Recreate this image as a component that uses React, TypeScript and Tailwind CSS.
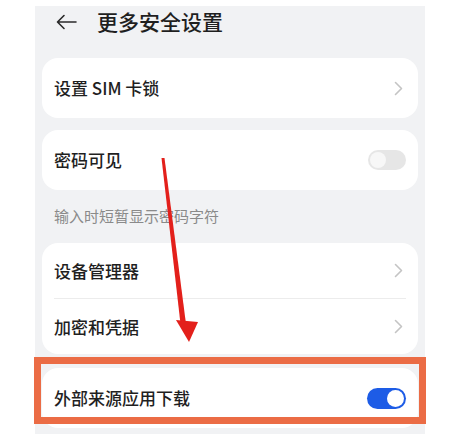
import React from 'react'

const font = { fontFamily: '"Noto Sans CJK SC", "Noto Sans", sans-serif' }

const Chevron = () => (
  <svg width="9" height="15" viewBox="0 0 9 15" fill="none">
    <path d="M1.5 1.5 L7.5 7.5 L1.5 13.5" stroke="#c4c4c4" strokeWidth="1.6" strokeLinecap="round" strokeLinejoin="round" />
  </svg>
)

const Toggle = ({ on }: { on: boolean }) =>
  on ? (
    <div className="w-[39px] h-[21px] rounded-full bg-[#1d5ce6] flex items-center justify-end pr-[2px]">
      <div className="w-[17px] h-[17px] rounded-full bg-white" />
    </div>
  ) : (
    <div className="w-[38px] h-[20px] rounded-full bg-[#e6e6e6] flex items-center pl-[2px]">
      <div className="w-[16px] h-[16px] rounded-full bg-[#f7f7f7]" />
    </div>
  )

const Row = ({ label, right }: { label: string; right: React.ReactNode }) => (
  <div className="flex items-center justify-between pl-[12px] pr-[12px] h-[55px]">
    <span className="text-[17px] font-medium text-[#1f1f1f]">{label}</span>
    {right}
  </div>
)

const App = () => {
  return (
    <div className="relative w-[473px] h-[434px] bg-white overflow-hidden" style={font}>
      <div className="ml-[35px] mt-[6px] w-[390px] h-[428px] bg-[#f1f2f4] flex flex-col px-[7px]">
        {/* header */}
        <div className="flex items-center h-[31px] pl-[14px]">
          <svg width="21" height="16" viewBox="0 0 21 16" fill="none">
            <path d="M20 8 H2 M8 1.5 L1.5 8 L8 14.5" stroke="#2a2a2a" strokeWidth="1.6" strokeLinecap="round" strokeLinejoin="round" />
          </svg>
          <span className="ml-[20px] text-[21px] font-medium text-[#1f1f1f]">更多安全设置</span>
        </div>

        <div className="mt-[21px] bg-white rounded-[16px] h-[60px] flex items-center justify-between px-[12px] pr-[15px]">
          <span className="text-[17px] font-medium text-[#1f1f1f]">设置 SIM 卡锁</span>
          <Chevron />
        </div>

        <div className="mt-[12px] bg-white rounded-[16px] h-[60px] flex items-center justify-between pl-[12px] pr-[12px]">
          <span className="text-[17px] font-medium text-[#1f1f1f]">密码可见</span>
          <Toggle on={false} />
        </div>

        <div className="h-[53px] flex items-center pl-[12px] text-[15px] text-[#8a8a8a]">输入时短暂显示密码字符</div>

        <div className="bg-white rounded-[16px] flex flex-col">
          <Row label="设备管理器" right={<span className="pr-[3px]"><Chevron /></span>} />
          <div className="mx-[12px] h-px bg-[#ececec]" />
          <Row label="加密和凭据" right={<span className="pr-[3px]"><Chevron /></span>} />
        </div>

        <div className="mt-[14px] bg-white rounded-[16px] h-[60px] flex items-center justify-between pl-[12px] pr-[12px]">
          <span className="text-[17px] font-medium text-[#1f1f1f]">外部来源应用下载</span>
          <Toggle on={true} />
        </div>
      </div>

      {/* annotation: orange frame */}
      <div className="absolute left-[34px] top-[357px] w-[392px] h-[67px] border-[7px] border-[#eb6c45]" />

      {/* annotation: red arrow */}
      <svg className="absolute left-0 top-0" width="473" height="434" viewBox="0 0 473 434">
        <polygon points="161.5,158 164.5,158 186,324 180.5,324" fill="#e3201b" />
        <polygon points="176,320 198,322 189,342" fill="#e3201b" />
      </svg>
    </div>
  )
}

export default App
